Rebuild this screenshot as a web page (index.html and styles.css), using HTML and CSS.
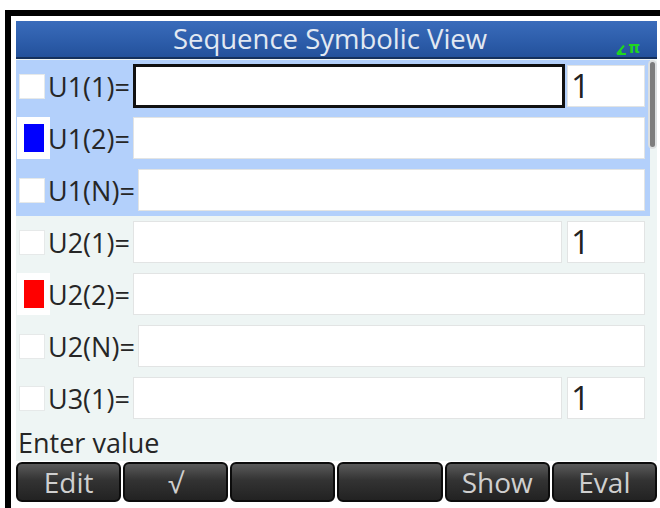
FILE: index.html
```html
<!DOCTYPE html>
<html lang="en">
<head>
  <meta charset="UTF-8" />
  <meta name="viewport" content="width=device-width, initial-scale=1.0" />
  <title>Sequence Symbolic View</title>
  <link rel="stylesheet" href="styles.css">
</head>
<body>
  <div class="frame">
    <div class="screen">
      <div class="header">
        <span class="title">Sequence Symbolic View</span>
        <span class="mode">
          <svg width="11" height="11" viewBox="0 0 11 11">
            <path d="M1 10 L8 1.5 M1 10 H10 M5 10 Q5 7 3.2 6.5" fill="none" stroke="#1fd61f" stroke-width="2"/>
          </svg>
          <span class="pi">π</span>
        </span>
      </div>

      <div class="list">
        <div class="group selected">
          <div class="row">
            <span class="check"></span>
            <span class="label">U1(1)=</span>
            <span class="field active"></span>
            <span class="value">1</span>
          </div>
          <div class="row">
            <span class="swatch"><i class="blue"></i></span>
            <span class="label">U1(2)=</span>
            <span class="field"></span>
          </div>
          <div class="row">
            <span class="check"></span>
            <span class="label">U1(N)=</span>
            <span class="field"></span>
          </div>
        </div>
        <div class="group">
          <div class="row">
            <span class="check"></span>
            <span class="label">U2(1)=</span>
            <span class="field"></span>
            <span class="value">1</span>
          </div>
          <div class="row">
            <span class="swatch"><i class="red"></i></span>
            <span class="label">U2(2)=</span>
            <span class="field"></span>
          </div>
          <div class="row">
            <span class="check"></span>
            <span class="label">U2(N)=</span>
            <span class="field"></span>
          </div>
        </div>
        <div class="group">
          <div class="row">
            <span class="check"></span>
            <span class="label">U3(1)=</span>
            <span class="field"></span>
            <span class="value">1</span>
          </div>
        </div>
        <div class="thumb"></div>
      </div>

      <div class="status">Enter value</div>

      <div class="menu">
        <button>Edit</button>
        <button>√</button>
        <button></button>
        <button></button>
        <button>Show</button>
        <button>Eval</button>
      </div>
    </div>
  </div>
</body>
</html>
```

FILE: styles.css
```css
body {
  margin: 0;
  background: #fff;
  font-family: "Open Sans", "DejaVu Sans", sans-serif;
}
.frame {
  box-sizing: border-box;
  width: 655px;
  height: 498px;
  margin: 10px 0 0 5px;
  padding: 5px 3px 0 5px;
  border-left: 6px solid #000;
  border-top: 6px solid #000;
}
.screen {
  width: 641px;
  background: #eef5f4;
}
.header {
  position: relative;
  height: 36px;
  line-height: 36px;
  padding-right: 13px;
  text-align: center;
  background: linear-gradient(#3a6cbb, #2c5ca9 60%, #23519b);
  border-bottom: 2px solid #14305c;
}
.title {
  font-size: 27.5px;
  color: #e2e9f2;
}
.mode {
  position: absolute;
  right: 17px;
  bottom: 2px;
  display: flex;
  align-items: flex-end;
  gap: 1px;
  line-height: 13px;
}
.pi {
  font-family: "DejaVu Sans", sans-serif;
  font-size: 15px;
  font-weight: bold;
  color: #1fd61f;
}
.list {
  position: relative;
  height: 365px;
  padding: 1px 7px 0 0;
}
.group.selected {
  background: #b3d0fb;
}
.row {
  display: flex;
  align-items: center;
  height: 52px;
  padding: 0 5px 0 1px;
}
.check {
  width: 24px;
  height: 23px;
  margin: 0 6px 0 3px;
  background: #fff;
  box-shadow: 0 0 0 1px #e6e9e9;
}
.swatch {
  display: flex;
  align-items: center;
  justify-content: center;
  width: 33px;
  height: 42px;
  background: #fff;
}
.swatch i {
  width: 20px;
  height: 28px;
}
.swatch .blue {
  background: #0000ff;
}
.swatch .red {
  background: #ff0000;
}
.label {
  margin-left: -2px;
  font-size: 27px;
  color: #262626;
}
.field {
  flex: 1;
  box-sizing: border-box;
  height: 42px;
  margin-left: 3px;
  background: #fff;
  border: 1px solid #e2e4e4;
}
.field.active {
  height: 44px;
  margin-right: -3px;
  border: 3px solid #111;
}
.value {
  box-sizing: border-box;
  width: 78px;
  height: 42px;
  margin-left: 5px;
  padding-left: 3px;
  background: #fff;
  border: 1px solid #e2e4e4;
  font-size: 33px;
  line-height: 40px;
  color: #222;
}
.thumb {
  position: absolute;
  top: 3px;
  right: 2px;
  width: 5px;
  height: 85px;
  border-radius: 3px;
  background: #7d7d7d;
  box-shadow: 0 0 0 2px #dcdfe0;
}
.status {
  height: 36px;
  line-height: 36px;
  padding-left: 2px;
  font-size: 27px;
  color: #262626;
}
.menu {
  display: grid;
  grid-template-columns: repeat(6, 1fr);
  gap: 2px;
  padding-top: 1px;
  background: #fff;
}
.menu button {
  height: 40px;
  padding: 0;
  border: 2px solid #0c0c0c;
  border-radius: 6px;
  background: linear-gradient(#5a5a5a, #333 45%, #222);
  color: #cfcfcf;
  font-family: "Open Sans", sans-serif;
  font-size: 28px;
  line-height: 34px;
}
```
